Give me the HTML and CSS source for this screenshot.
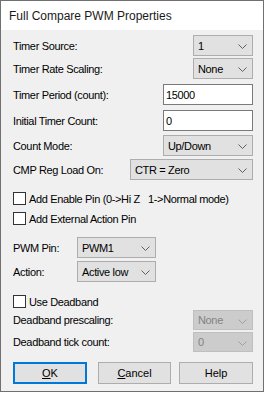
FILE: index.html
```html
<!DOCTYPE html>
<html lang="en">
<head>
    <meta charset="UTF-8">
    <meta name="viewport" content="width=device-width, initial-scale=1.0">
    <title>Full Compare PWM Properties</title>
    <link rel="stylesheet" href="styles.css">
</head>
<body>

    <div class="window">
        <div class="titlebar">Full Compare PWM Properties</div>

        <div class="content">
            <!-- Timer settings -->
            <div class="row r1">
                <span class="label">Timer Source:</span>
                <div class="combo w-small">1<svg class="chev" width="9" height="5"><polyline points="0.5,0.5 4.5,4.5 8.5,0.5"/></svg></div>
            </div>
            <div class="row r2">
                <span class="label">Timer Rate Scaling:</span>
                <div class="combo w-small">None<svg class="chev" width="9" height="5"><polyline points="0.5,0.5 4.5,4.5 8.5,0.5"/></svg></div>
            </div>
            <div class="row r3">
                <span class="label">Timer Period (count):</span>
                <div class="textbox">15000</div>
            </div>
            <div class="row r3">
                <span class="label">Initial Timer Count:</span>
                <div class="textbox">0</div>
            </div>
            <div class="row r5">
                <span class="label">Count Mode:</span>
                <div class="combo w-mid">Up/Down<svg class="chev" width="9" height="5"><polyline points="0.5,0.5 4.5,4.5 8.5,0.5"/></svg></div>
            </div>
            <div class="row r6">
                <span class="label">CMP Reg Load On:</span>
                <div class="combo w-wide">CTR = Zero<svg class="chev" width="9" height="5"><polyline points="0.5,0.5 4.5,4.5 8.5,0.5"/></svg></div>
            </div>

            <!-- Pin options -->
            <div class="check c1"><span class="box"></span>Add Enable Pin (0-&gt;Hi Z &nbsp; 1-&gt;Normal mode)</div>
            <div class="check c2"><span class="box"></span>Add External Action Pin</div>

            <div class="row pin r-pin">
                <span class="label">PWM Pin:</span>
                <div class="combo w-pin">PWM1<svg class="chev" width="9" height="5"><polyline points="0.5,0.5 4.5,4.5 8.5,0.5"/></svg></div>
            </div>
            <div class="row pin r-action">
                <span class="label">Action:</span>
                <div class="combo w-pin">Active low<svg class="chev" width="9" height="5"><polyline points="0.5,0.5 4.5,4.5 8.5,0.5"/></svg></div>
            </div>

            <!-- Deadband -->
            <div class="check c3"><span class="box"></span>Use Deadband</div>
            <div class="row r-db">
                <span class="label">Deadband prescaling:</span>
                <div class="combo w-small disabled">None<svg class="chev" width="9" height="5"><polyline points="0.5,0.5 4.5,4.5 8.5,0.5"/></svg></div>
            </div>
            <div class="row r-db">
                <span class="label">Deadband tick count:</span>
                <div class="combo w-small disabled">0<svg class="chev" width="9" height="5"><polyline points="0.5,0.5 4.5,4.5 8.5,0.5"/></svg></div>
            </div>

            <div class="buttons">
                <button class="btn btn-ok"><u>O</u>K</button>
                <button class="btn btn-cancel"><u>C</u>ancel</button>
                <button class="btn btn-help">Help</button>
            </div>
        </div>
    </div>

</body>
</html>
```

FILE: styles.css
```css
body {
    margin: 0;
    background: #ffffff;
    font-family: "Liberation Sans", Arial, sans-serif;
    font-size: 11px;
    letter-spacing: -0.35px;
    color: #000;
}
.window {
    width: 264px;
    height: 392px;
    box-sizing: border-box;
    border: 1px solid #707070;
    background: #f0f0f0;
}
.titlebar {
    height: 29px;
    background: #fff;
    padding-left: 8px;
    font-size: 12px;
    letter-spacing: 0;
    line-height: 30px;
    color: #1a1a1a;
}
.content {
    padding: 0 10px 0 12px;
}
.row {
    display: flex;
    align-items: center;
    justify-content: space-between;
    height: 21px;
}
.row.pin {
    justify-content: flex-start;
}
.row.pin .label {
    width: 64px;
}
.r1 { margin-top: 5px; }
.r2 { margin-top: 2px; }
.r3 { margin-top: 5px; }
.r5 { margin-top: 4px; }
.r6 { margin-top: 3px; }
.r-pin { margin-top: 12px; }
.r-action { margin-top: 3px; }
.r-db { margin-top: 2px; height: 20px; }

.combo {
    position: relative;
    height: 100%;
    box-sizing: border-box;
    border: 1px solid #adadad;
    background: #e1e1e1;
    padding-left: 4px;
    display: flex;
    align-items: center;
}
.combo .chev {
    position: absolute;
    right: 5px;
    top: 8px;
}
.chev polyline {
    fill: none;
    stroke: #606060;
    stroke-width: 1;
}
.combo.disabled {
    background: #cccccc;
    border-color: #bfbfbf;
    color: #838383;
}
.combo.disabled .chev polyline {
    stroke: #a0a0a0;
}
.w-small { width: 60px; }
.w-mid { width: 90px; }
.w-wide { width: 123px; }
.w-pin { width: 79px; }

.textbox {
    width: 90px;
    height: 100%;
    box-sizing: border-box;
    border: 1px solid #7a7a7a;
    background: #fff;
    padding-left: 2px;
    display: flex;
    align-items: center;
}

.check {
    display: flex;
    align-items: center;
    height: 13px;
}
.check .box {
    width: 13px;
    height: 13px;
    box-sizing: border-box;
    border: 1px solid #333;
    background: #fff;
    margin-right: 3px;
}
.c1 { margin-top: 12px; }
.c2 { margin-top: 7px; }
.c3 { margin-top: 13px; }

.buttons {
    display: flex;
    margin-top: 10px;
}
.btn {
    height: 22px;
    box-sizing: border-box;
    border: 1px solid #adadad;
    background: #e1e1e1;
    font-family: "Liberation Sans", Arial, sans-serif;
    font-size: 11px;
    letter-spacing: 0;
    color: #000;
    padding: 0;
}
.btn-ok {
    width: 74px;
    border: 2px solid #0078d7;
}
.btn-cancel {
    width: 73px;
    margin-left: 11px;
}
.btn-help {
    width: 74px;
    margin-left: 8px;
}
```
